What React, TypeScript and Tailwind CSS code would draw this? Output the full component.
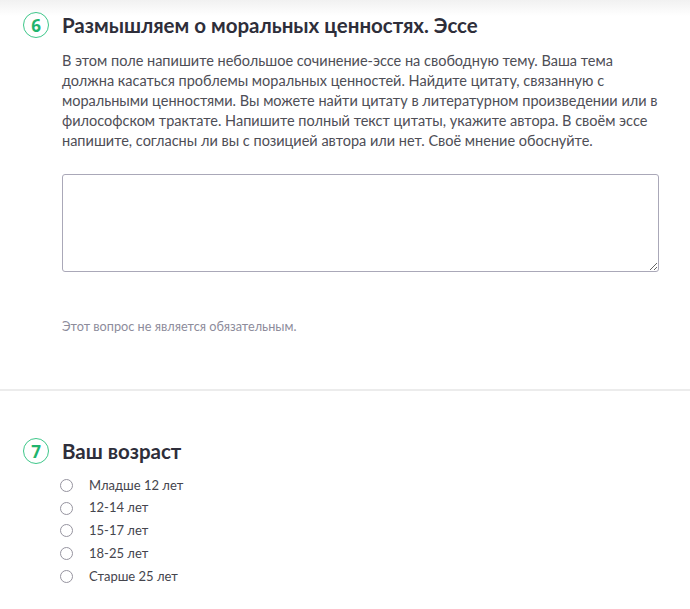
const ages = ['Младше 12 лет', '12-14 лет', '15-17 лет', '18-25 лет', 'Старше 25 лет'];

const descLines = [
  'В этом поле напишите небольшое сочинение-эссе на свободную тему. Ваша тема',
  'должна касаться проблемы моральных ценностей. Найдите цитату, связанную с',
  'моральными ценностями. Вы можете найти цитату в литературном произведении или в',
  'философском трактате. Напишите полный текст цитаты, укажите автора. В своём эссе',
  'напишите, согласны ли вы с позицией автора или нет. Своё мнение обоснуйте.',
];

const QuestionTitle = ({ num, title }: { num: number; title: string }) => (
  <div className="flex items-center gap-[13px] pl-[23px]">
    <div className="w-[26px] h-[26px] shrink-0 rounded-full border-[1.5px] border-[#3ec78a] flex items-center justify-center text-[#1fb46e] text-[17px] font-bold leading-none font-['Open_Sans',sans-serif]">
      {num}
    </div>
    <h2 className="text-[20.5px] leading-[26px] font-bold text-[#2e2e3a] font-['Lato',sans-serif]">{title}</h2>
  </div>
);

export default function App() {
  return (
    <div className="min-h-screen w-full bg-white font-['Lato',sans-serif]">
      {/* Question 6 */}
      <section className="pt-[12px] pb-[55px] bg-[linear-gradient(to_bottom,#f1f1f1,#ffffff_16px)]">
        <QuestionTitle num={6} title="Размышляем о моральных ценностях. Эссе" />
        <div className="mt-[13px] pl-[62px] text-[14.5px] leading-[20px] text-[#4e4e56]">
          {descLines.map((line) => (
            <p key={line} className="whitespace-nowrap">{line}</p>
          ))}
        </div>
        <div className="mt-[23px] pl-[62px] pr-[31px]">
          <textarea className="block w-full h-[98px] rounded-[3px] border border-[#aaa8b8] bg-white outline-none" />
        </div>
        <p className="mt-[46px] pl-[62px] text-[12.7px] leading-[16px] text-[#8d8c9b]">
          Этот вопрос не является обязательным.
        </p>
      </section>

      <div className="h-[2px] bg-[#ececec]" />

      {/* Question 7 */}
      <section className="pt-[47px] pb-[20px]">
        <QuestionTitle num={7} title="Ваш возраст" />
        <ul className="mt-[10px]">
          {ages.map((age) => (
            <li key={age} className="flex items-center h-[22.75px] pl-[60px] gap-[16px]">
              <span className="w-[13px] h-[13px] shrink-0 rounded-full border border-[#96949f] bg-white" />
              <span className="text-[13px] text-[#45454d]">{age}</span>
            </li>
          ))}
        </ul>
      </section>
    </div>
  );
}
